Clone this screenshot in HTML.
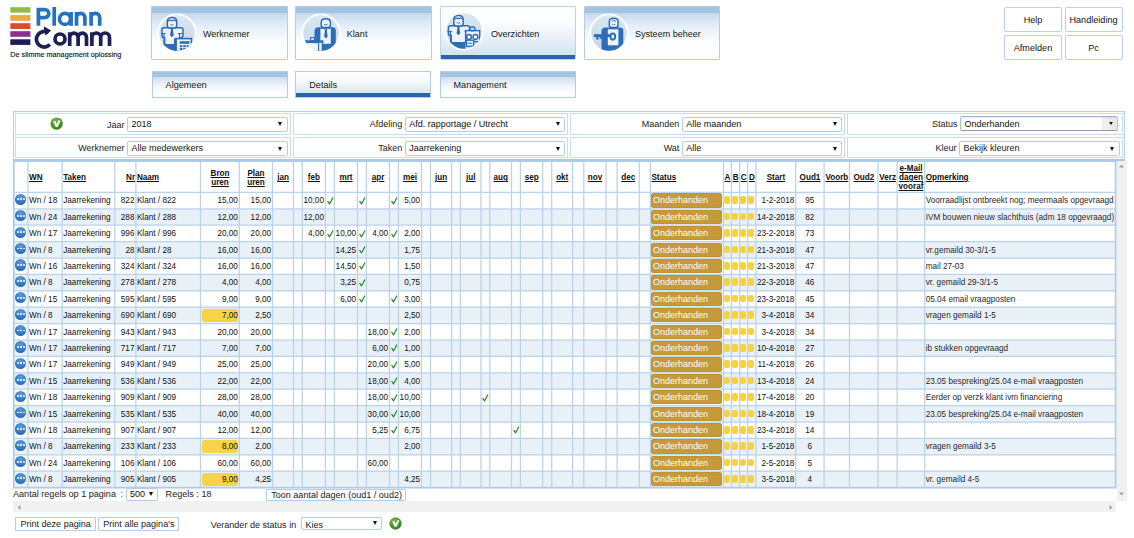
<!DOCTYPE html>
<html><head><meta charset="utf-8">
<style>
*{box-sizing:border-box;margin:0;padding:0}
html,body{width:1134px;height:538px;overflow:hidden;background:#fff;font-family:"Liberation Sans",sans-serif;color:#222}
.abs{position:absolute}
/* nav */
.nb{position:absolute;top:5.85px;width:136.3px;height:54.65px;border:1px solid #b3cde7;border-radius:1px;
 background:linear-gradient(#a4c3e1 0,#a4c3e1 5.6px,#c4d9ed 5.6px,#e3edf7 18px,#fbfdfe 34px,#fff 100%)}
.nb.sel{background:linear-gradient(#fff 0,#fbfdfe 30%,#d4e3f1 calc(100% - 3.8px),#2b63ae calc(100% - 3.8px),#2b63ae 100%);border-color:#bcd3ea}
.nb span{position:absolute;left:50.5px;top:22.2px;font-size:9.05px;color:#151515}
.nb svg{position:absolute;left:4.6px;top:5.7px}
.sb{position:absolute;top:70.8px;width:136.2px;height:26.8px;border:1px solid #b3cde7;
 background:linear-gradient(#a4c3e1 0,#a4c3e1 5.4px,#cfe0f0 5.4px,#eef4fa 13px,#fff 22px,#fff 100%)}
.sb.sel{background:linear-gradient(#fff 0,#f6f9fc 40%,#d8e6f3 calc(100% - 4.3px),#2b63ae calc(100% - 4.3px),#2b63ae 100%)}
.sb span{position:absolute;left:13px;top:8.2px;font-size:9.1px;color:#151515}
.tb{position:absolute;height:25.2px;border:1px solid #b8d1ea;border-radius:2px;background:#fff;font-size:9.1px;color:#111;text-align:center;line-height:24.2px}
/* filter */
.ft{position:absolute;left:13.2px;top:110.6px;width:1111.4px;height:50.4px;border:1px solid #b6cfe7;border-bottom:2px solid #a9c6e3}
.fc{position:absolute;height:22px;border:1px solid #c9dcef}
.fl{position:absolute;font-size:9px;color:#1a1a1a;text-align:right;width:110px}
.sel2{position:absolute;width:160.4px;height:15.4px;border:1px solid #b3cde6;border-radius:2px;background:#fff;font-size:9px;line-height:13px;padding-left:3.3px;color:#111}
.sel2:after{content:"";position:absolute;right:4.2px;top:4.6px;border-left:2.3px solid transparent;border-right:2.3px solid transparent;border-top:4px solid #111}
.sel2.sm:after{top:2.8px}
.sel2.st4{border:1px solid #b4c4d2;border-top-color:#9fb4c8;border-bottom-color:#8d9cab;box-shadow:inset 1px 1px 1px rgba(0,0,0,.08);border-radius:2px;background:linear-gradient(to right,#fff 0,#fff calc(100% - 14.5px),#efefef calc(100% - 14.5px),#e9e9e9 100%)}
.sel2.st4:after{right:3.8px;top:5.6px;border-left-width:2.9px;border-right-width:2.9px;border-top-width:3.4px}
/* grid */
.rbg{position:absolute;left:13.7px;width:1102px;background:#e8f0f8}
.hl{position:absolute;left:13px;width:1104px;height:2px;background:#d0e1f1}
.vl{position:absolute;top:160px;height:329px;width:2px;background:#d0e1f1}
.hc{position:absolute;top:162.5px;height:30.5px;display:flex;align-items:center;font-size:8.15px;font-weight:bold;line-height:9.2px;color:#111}
.hc u{text-decoration:underline;text-underline-offset:1px}
.hc.center{justify-content:center;text-align:center}
.hc.right{justify-content:flex-end;text-align:right}
.hc.left{justify-content:flex-start}
.c{position:absolute;height:16.4px;line-height:16.4px;padding-top:1px;font-size:8.2px;white-space:nowrap;color:#111}
.c.right{text-align:right}
.c.center{text-align:center}
.c.opm{color:#2a2a2a;width:190px!important}
.ico{position:absolute;left:15.1px;width:11.4px;height:11.4px;border-radius:50%;background:radial-gradient(circle at 50% 30%,#5a9de0,#2d6fbd 70%,#245fa8);display:flex;justify-content:center;align-items:center;gap:1.3px}
.ico i{display:block;width:1.8px;height:1.8px;background:#fff;border-radius:50%}
.chk{position:absolute}
.st{position:absolute;left:651.3px;width:70.8px;height:14.3px;border-radius:3px;background:#c59a38;box-shadow:inset 0 0 0 0.6px #b88d2c;color:#fff;font-size:9px;line-height:14.8px;padding-left:1.7px}
.dot{position:absolute;width:6px;height:7.8px;border-radius:2px;background:#f7d23c}
.hib{position:absolute;width:36.5px;height:13.4px;border-radius:3px;background:#f6d347}
/* scrollbars */
.vs{position:absolute;left:1116.5px;top:161.2px;width:10px;height:339.8px;background:#f1f1f1}
.hs{position:absolute;left:13.2px;top:501.2px;width:1102.8px;height:11.3px;background:#f1f1f1}
.btn{position:absolute;height:13.8px;border:1px solid #b3cee8;border-radius:1px;background:#fff;font-size:9.05px;line-height:12px;color:#222;padding-left:4.6px;white-space:nowrap}
</style></head><body>

<svg class="abs" style="left:0;top:0" width="130" height="62" viewBox="0 0 130 62">
<rect x="10.3" y="7.2" width="20.1" height="5.5" fill="#8dbf45"/>
<rect x="10.3" y="15.1" width="20.1" height="5.7" fill="#efa944"/>
<rect x="10.3" y="23.2" width="20.1" height="5.8" fill="#e04a2c"/>
<rect x="10.3" y="31.2" width="20.1" height="5.6" fill="#8c2f8f"/>
<rect x="10.3" y="39.3" width="20.1" height="5.6" fill="#1c1f55"/>
<g fill="none" stroke="#2673bd" stroke-width="3.7">
<path d="M38.4 7.8 V25.8 M38.4 9.6 H44.8 A4 4 0 0 1 44.8 17.6 H38.4"/>
<path d="M54.2 7 V25.8"/>
<circle cx="65" cy="18.9" r="5.5"/><path d="M71.1 12 V25.8"/>
<path d="M76.5 12 V25.8 M76.5 17.6 A4.2 4.2 0 0 1 84.9 17.6 V25.8"/>
<path d="M91.1 12 V25.8 M91.1 17.6 A4.3 4.3 0 0 1 99.7 17.6 V25.8"/>
</g>
<g fill="none" stroke="#1e1f55" stroke-width="3.7">
<path d="M48.6 32.8 A7.8 7.8 0 1 0 49.9 44.6"/>
<circle cx="60" cy="39" r="5"/>
<path d="M69.7 32.2 V45.9 M69.7 37.4 A4.2 4.2 0 0 1 78.1 37.4 V45.9 M78.1 37.4 A4.2 4.2 0 0 1 86.5 37.4 V45.9"/>
<path d="M91.9 32.2 V45.9 M91.9 37.4 A4.4 4.4 0 0 1 100.7 37.4 V45.9 M100.7 37.4 A4.4 4.4 0 0 1 109.5 37.4 V45.9"/>
</g>
<path d="M43.6 26.3 L51.2 30.6 L45.4 35.6 Z" fill="#1e1f55"/>
<text x="10.3" y="56.8" font-family="Liberation Sans" font-size="7.25" fill="#1a1a1a" stroke="#1a1a1a" stroke-width="0.15" textLength="111.1" lengthAdjust="spacingAndGlyphs">De slimme management oplossing</text>
</svg>
<div class="nb" style="left:151.4px"><svg width="40" height="40" viewBox="0 0 40 40"><defs><linearGradient id="gw" x1="0" y1="0" x2="0" y2="1"><stop offset="0" stop-color="#dbe7f3"/><stop offset="1" stop-color="#c4d8eb"/></linearGradient><clipPath id="cpw"><circle cx="20" cy="20" r="17.8"/></clipPath></defs><circle cx="20" cy="20" r="19.6" fill="#fff"/><circle cx="20" cy="20" r="17.8" fill="url(#gw)"/><g clip-path="url(#cpw)"><g transform="translate(0,0)"><path d="M5.5 14.8 h18.5 q2 0 2 2 v5.5 q0 2.5 -2.3 2.5 h-0.5 v7 h-15.5 v-7 h-0.5 q-2.2 0 -2.2 -2.5 v-5.5 q0 -2 2 -2 z" fill="#eef3f9" stroke="#2d6db7" stroke-width="1.5"/><path d="M7 21 v10" stroke="#2d6db7" stroke-width="1.2"/><path d="M22.5 21 v10" stroke="#2d6db7" stroke-width="1.2"/><path d="M4 20.5 h4.5 M21 20.5 h4.5" stroke="#2d6db7" stroke-width="1.2"/><path d="M3 31 h19 v10 h-19 z" fill="#2d6db7"/><path d="M10.3 8.5 q0 -4 4.7 -4 q4.7 0 4.7 4 v4 q0 2.5 -2.5 2.5 h-4.4 q-2.5 0 -2.5 -2.5 z" fill="#eef3f9" stroke="#2d6db7" stroke-width="1.5"/><path d="M11 8.3 q2 -2.2 4 -0.5 q2 -1.7 4 0.5" fill="none" stroke="#2d6db7" stroke-width="1.2"/><path d="M13.3 11.6 q1.7 1.3 3.4 0" fill="none" stroke="#2d6db7" stroke-width="0.9"/><path d="M13.6 15 h2.6 l-0.3 2 l0.9 5.3 l-1.9 2 l-1.9 -2 l0.9 -5.3 z" fill="#2d6db7"/></g><rect x="18.4" y="25.6" width="16" height="13" fill="#eef3f9" stroke="#2d6db7" stroke-width="1.6"/><path d="M18.4 25.6 v14" stroke="#2d6db7" stroke-width="3"/><rect x="22.8" y="28.2" width="9.6" height="2.6" fill="#2d6db7"/><rect x="22.8" y="32.2" width="2.6" height="2" fill="#2d6db7"/><rect x="26.2" y="32.2" width="2.6" height="2" fill="#2d6db7"/><rect x="29.6" y="32.2" width="2.6" height="2" fill="#2d6db7"/><rect x="22.8" y="35.0" width="2.6" height="2" fill="#2d6db7"/><rect x="26.2" y="35.0" width="2.6" height="2" fill="#2d6db7"/><rect x="29.6" y="35.0" width="2.6" height="2" fill="#2d6db7"/></g></svg><span>Werknemer</span></div>
<div class="nb" style="left:295.3px"><svg width="40" height="40" viewBox="0 0 40 40"><defs><linearGradient id="gk" x1="0" y1="0" x2="0" y2="1"><stop offset="0" stop-color="#dbe7f3"/><stop offset="1" stop-color="#c4d8eb"/></linearGradient><clipPath id="cpk"><circle cx="20" cy="20" r="17.8"/></clipPath></defs><circle cx="20" cy="20" r="19.6" fill="#fff"/><circle cx="20" cy="20" r="17.8" fill="url(#gk)"/><g clip-path="url(#cpk)"><path d="M17.5 14.2 h14 q3.3 0 3.3 3.3 v15 q-1.5 5 -8 5.5 h-13.3 v-19.5 q0 -4.3 4 -4.3 z" fill="#2d6db7"/><rect x="19.4" y="15.8" width="10.4" height="15" fill="#eef3f9"/><path d="M23.3 16.2 h2.9 l-0.3 1.8 l0.8 5.6 l-1.8 1.8 l-1.8 -1.8 l0.8 -5.6 z" fill="#2d6db7"/><path d="M20.2 9.2 q0 -3.5 4.6 -3.5 q4.6 0 4.6 3.5 v2.6 q0 2.8 -2.4 2.8 h-4.4 q-2.4 0 -2.4 -2.8 z" fill="#eef3f9" stroke="#2d6db7" stroke-width="1.5"/><path d="M23 11.3 q1.8 1.3 3.6 0" fill="none" stroke="#2d6db7" stroke-width="0.9"/><rect x="3" y="27.3" width="19.5" height="2.9" fill="#2d6db7"/><rect x="3" y="30.2" width="14.6" height="10" fill="#eef3f9"/><rect x="17.6" y="29.2" width="3.6" height="12" fill="#eef3f9" stroke="#2d6db7" stroke-width="1.1"/><rect x="9.6" y="24.6" width="3.8" height="2.9" fill="#eef3f9" stroke="#2d6db7" stroke-width="1.1"/></g></svg><span>Klant</span></div>
<div class="nb sel" style="left:439.5px"><svg style="left:3.2px;top:4.5px" width="40" height="40" viewBox="0 0 40 40"><defs><linearGradient id="go" x1="0" y1="0" x2="0" y2="1"><stop offset="0" stop-color="#dbe7f3"/><stop offset="1" stop-color="#c4d8eb"/></linearGradient><clipPath id="cpo"><circle cx="20" cy="20" r="17.8"/></clipPath></defs><circle cx="20" cy="20" r="19.6" fill="#fff"/><circle cx="20" cy="20" r="17.8" fill="url(#go)"/><g clip-path="url(#cpo)"><g transform="translate(-0.5,0)"><path d="M5.5 14.8 h18.5 q2 0 2 2 v5.5 q0 2.5 -2.3 2.5 h-0.5 v7 h-15.5 v-7 h-0.5 q-2.2 0 -2.2 -2.5 v-5.5 q0 -2 2 -2 z" fill="#eef3f9" stroke="#2d6db7" stroke-width="1.5"/><path d="M7 21 v10" stroke="#2d6db7" stroke-width="1.2"/><path d="M22.5 21 v10" stroke="#2d6db7" stroke-width="1.2"/><path d="M4 20.5 h4.5 M21 20.5 h4.5" stroke="#2d6db7" stroke-width="1.2"/><path d="M3 31 h19 v10 h-19 z" fill="#2d6db7"/><path d="M10.3 8.5 q0 -4 4.7 -4 q4.7 0 4.7 4 v4 q0 2.5 -2.5 2.5 h-4.4 q-2.5 0 -2.5 -2.5 z" fill="#eef3f9" stroke="#2d6db7" stroke-width="1.5"/><path d="M11 8.3 q2 -2.2 4 -0.5 q2 -1.7 4 0.5" fill="none" stroke="#2d6db7" stroke-width="1.2"/><path d="M13.3 11.6 q1.7 1.3 3.4 0" fill="none" stroke="#2d6db7" stroke-width="0.9"/><path d="M13.6 15 h2.6 l-0.3 2 l0.9 5.3 l-1.9 2 l-1.9 -2 l0.9 -5.3 z" fill="#2d6db7"/></g><rect x="21.6" y="19.6" width="14" height="11" fill="#eef3f9" stroke="#2d6db7" stroke-width="1.4"/><rect x="26" y="16" width="5" height="3.8" rx="1.5" fill="none" stroke="#2d6db7" stroke-width="1.3"/><circle cx="25" cy="26" r="2.4" fill="#fff" stroke="#2d6db7" stroke-width="1.5"/><circle cx="31.4" cy="26" r="2.4" fill="#fff" stroke="#2d6db7" stroke-width="1.5"/><rect x="22.6" y="29.2" width="7" height="6" fill="#eef3f9" stroke="#2d6db7" stroke-width="1.3"/><path d="M24 32.2 h4.2" stroke="#2d6db7" stroke-width="1.1"/></g></svg><span>Overzichten</span></div>
<div class="nb" style="left:583.5px"><svg width="40" height="40" viewBox="0 0 40 40"><defs><linearGradient id="gs" x1="0" y1="0" x2="0" y2="1"><stop offset="0" stop-color="#dbe7f3"/><stop offset="1" stop-color="#c4d8eb"/></linearGradient><clipPath id="cps"><circle cx="20" cy="20" r="17.8"/></clipPath></defs><circle cx="20" cy="20" r="19.6" fill="#fff"/><circle cx="20" cy="20" r="17.8" fill="url(#gs)"/><g clip-path="url(#cps)"><path d="M16.5 14.5 h14.5 q3.3 0 3.3 3.3 v15 q-1.5 5.5 -8 5.5 h-13.8 v-19.8 q0 -4 4 -4 z" fill="#2d6db7"/><rect x="18.8" y="16.3" width="10.6" height="16" fill="#eef3f9"/><ellipse cx="23.8" cy="23.6" rx="2.4" ry="3.1" fill="none" stroke="#2d6db7" stroke-width="1.9"/><path d="M20.3 8.5 q0 -3.2 4.4 -3.2 q4.4 0 4.4 3.2 v3.6 q0 2.4 -2.4 2.4 h-4 q-2.4 0 -2.4 -2.4 z" fill="#eef3f9" stroke="#2d6db7" stroke-width="1.5"/><path d="M22.6 8.7 l2.1 -1.8 l2.1 1.8" fill="none" stroke="#2d6db7" stroke-width="1"/><path d="M23.2 11.3 q1.5 1 3 0" fill="none" stroke="#2d6db7" stroke-width="0.9"/><rect x="4.8" y="21.2" width="16.8" height="2.8" fill="#2d6db7"/><rect x="7.2" y="23" width="2.3" height="3.6" fill="#2d6db7"/><rect x="10.6" y="23" width="2.3" height="2.8" fill="#2d6db7"/></g></svg><span>Systeem beheer</span></div>
<div class="sb" style="left:151.6px"><span>Algemeen</span></div>
<div class="sb sel" style="left:295.3px"><span>Details</span></div>
<div class="sb" style="left:439.5px"><span>Management</span></div>
<div class="tb" style="left:1004.1px;top:6.5px;width:57.8px">Help</div>
<div class="tb" style="left:1064.5px;top:6.5px;width:58px">Handleiding</div>
<div class="tb" style="left:1004.1px;top:34.8px;width:57.8px">Afmelden</div>
<div class="tb" style="left:1064.5px;top:34.8px;width:58px">Pc</div>
<div class="ft"></div>
<div class="fc" style="left:15.4px;top:112.8px;width:275.3px;height:22.4px"></div>
<div class="fl" style="left:14.6px;top:118.3px;line-height:15px">Jaar</div>
<div class="sel2" style="left:127.2px;top:116.5px;padding-top:0.8px">2018</div>
<div class="fc" style="left:292.9px;top:112.8px;width:275.5px;height:22.4px"></div>
<div class="fl" style="left:292.3px;top:116.5px;line-height:15px">Afdeling</div>
<div class="sel2" style="left:404.9px;top:116.5px;padding-top:0.8px">Afd. rapportage / Utrecht</div>
<div class="fc" style="left:570.3px;top:112.8px;width:275.1px;height:22.4px"></div>
<div class="fl" style="left:569.3px;top:116.5px;line-height:15px">Maanden</div>
<div class="sel2" style="left:681.9px;top:116.5px;padding-top:0.8px">Alle maanden</div>
<div class="fc" style="left:847.3px;top:112.8px;width:275.4px;height:22.4px"></div>
<div class="fl" style="left:847.6px;top:116.5px;line-height:15px">Status</div>
<div class="sel2 st4" style="left:960.2px;top:116.5px;padding-top:0.8px;width:158.1px;top:115.9px;height:15.4px">Onderhanden</div>
<div class="fc" style="left:15.4px;top:137.4px;width:275.3px;height:20.9px"></div>
<div class="fl" style="left:14.6px;top:141.1px;line-height:15px">Werknemer</div>
<div class="sel2" style="left:127.2px;top:141.1px">Alle medewerkers</div>
<div class="fc" style="left:292.9px;top:137.4px;width:275.5px;height:20.9px"></div>
<div class="fl" style="left:292.3px;top:141.1px;line-height:15px">Taken</div>
<div class="sel2" style="left:404.9px;top:141.1px">Jaarrekening</div>
<div class="fc" style="left:570.3px;top:137.4px;width:275.1px;height:20.9px"></div>
<div class="fl" style="left:569.3px;top:141.1px;line-height:15px">Wat</div>
<div class="sel2" style="left:681.9px;top:141.1px">Alle</div>
<div class="fc" style="left:847.3px;top:137.4px;width:275.4px;height:20.9px"></div>
<div class="fl" style="left:846.6px;top:141.1px;line-height:15px">Kleur</div>
<div class="sel2" style="left:959.2px;top:141.1px;color:#1a1a1a">Bekijk kleuren</div>
<svg class="abs" style="left:49.9px;top:116.9px" width="13.2" height="13.2" viewBox="0 0 14 14"><defs><radialGradient id="gc56" cx="0.4" cy="0.3" r="0.8"><stop offset="0" stop-color="#74bd45"/><stop offset="1" stop-color="#2c7520"/></radialGradient></defs><circle cx="7" cy="7" r="6.6" fill="url(#gc56)"/><path d="M3.4 4.5 L5.7 4.3 L7.1 7.6 L9.3 3.2 L11.2 3.9 L8 10.6 L6.1 10.6 Z" fill="#fff"/></svg>
<div class="rbg" style="top:208.8px;height:16.4px"></div>
<div class="rbg" style="top:241.6px;height:16.4px"></div>
<div class="rbg" style="top:274.4px;height:16.4px"></div>
<div class="rbg" style="top:307.2px;height:16.4px"></div>
<div class="rbg" style="top:340px;height:16.4px"></div>
<div class="rbg" style="top:372.8px;height:16.4px"></div>
<div class="rbg" style="top:405.6px;height:16.4px"></div>
<div class="rbg" style="top:438.4px;height:16.4px"></div>
<div class="rbg" style="top:471.2px;height:16.4px"></div>
<svg class="abs" style="left:0;top:0" width="1134" height="538" viewBox="0 0 1134 538"><g stroke="#bad2ea" stroke-width="1.25" fill="none"><path d="M13.1 161.2 H1116.2"/><path d="M13.1 192.4 H1116.2"/><path d="M13.1 208.8 H1116.2"/><path d="M13.1 225.2 H1116.2"/><path d="M13.1 241.6 H1116.2"/><path d="M13.1 258 H1116.2"/><path d="M13.1 274.4 H1116.2"/><path d="M13.1 290.8 H1116.2"/><path d="M13.1 307.2 H1116.2"/><path d="M13.1 323.6 H1116.2"/><path d="M13.1 340 H1116.2"/><path d="M13.1 356.4 H1116.2"/><path d="M13.1 372.8 H1116.2"/><path d="M13.1 389.2 H1116.2"/><path d="M13.1 405.6 H1116.2"/><path d="M13.1 422 H1116.2"/><path d="M13.1 438.4 H1116.2"/><path d="M13.1 454.8 H1116.2"/><path d="M13.1 471.2 H1116.2"/><path d="M13.1 487.6 H1116.2"/><path d="M13.7 160.6 V488.3"/><path d="M28 160.6 V488.3"/><path d="M62.2 160.6 V488.3"/><path d="M114.8 160.6 V488.3"/><path d="M135.9 160.6 V488.3"/><path d="M200.5 160.6 V488.3"/><path d="M239.3 160.6 V488.3"/><path d="M272.5 160.6 V488.3"/><path d="M293.5 160.6 V488.3"/><path d="M302.3 160.6 V488.3"/><path d="M325.4 160.6 V488.3"/><path d="M334.4 160.6 V488.3"/><path d="M357.5 160.6 V488.3"/><path d="M366.4 160.6 V488.3"/><path d="M389.5 160.6 V488.3"/><path d="M398.4 160.6 V488.3"/><path d="M421.5 160.6 V488.3"/><path d="M430.5 160.6 V488.3"/><path d="M451.6 160.6 V488.3"/><path d="M460.4 160.6 V488.3"/><path d="M481 160.6 V488.3"/><path d="M489.8 160.6 V488.3"/><path d="M511.5 160.6 V488.3"/><path d="M520.4 160.6 V488.3"/><path d="M542.7 160.6 V488.3"/><path d="M551.7 160.6 V488.3"/><path d="M572.6 160.6 V488.3"/><path d="M583.8 160.6 V488.3"/><path d="M606 160.6 V488.3"/><path d="M617.1 160.6 V488.3"/><path d="M639.3 160.6 V488.3"/><path d="M650.4 160.6 V488.3"/><path d="M723.5 160.6 V488.3"/><path d="M731.4 160.6 V488.3"/><path d="M739.7 160.6 V488.3"/><path d="M747.6 160.6 V488.3"/><path d="M755.9 160.6 V488.3"/><path d="M795.7 160.6 V488.3"/><path d="M824.1 160.6 V488.3"/><path d="M849.5 160.6 V488.3"/><path d="M878 160.6 V488.3"/><path d="M897.1 160.6 V488.3"/><path d="M924.7 160.6 V488.3"/><path d="M1115.6 160.6 V488.3"/></g><rect x="13.7" y="161.2" width="1101.9" height="326.4" fill="none" stroke="#afcbe7" stroke-width="1.6"/></svg>
<div class="hc left" style="left:29px;width:32.4px"><u>WN</u></div>
<div class="hc left" style="left:63.2px;width:50.8px"><u>Taken</u></div>
<div class="hc right" style="left:115.8px;width:19.3px"><u>Nr</u></div>
<div class="hc left" style="left:136.9px;width:62.8px"><u>Naam</u></div>
<div class="hc center" style="left:201.5px;width:37px"><u>Bron<br>uren</u></div>
<div class="hc center" style="left:240.3px;width:31.4px"><u>Plan<br>uren</u></div>
<div class="hc center" style="left:273.5px;width:19.2px"><u>jan</u></div>
<div class="hc center" style="left:303.3px;width:21.3px"><u>feb</u></div>
<div class="hc center" style="left:335.4px;width:21.3px"><u>mrt</u></div>
<div class="hc center" style="left:367.4px;width:21.3px"><u>apr</u></div>
<div class="hc center" style="left:399.4px;width:21.3px"><u>mei</u></div>
<div class="hc center" style="left:431.5px;width:19.3px"><u>jun</u></div>
<div class="hc center" style="left:461.4px;width:18.8px"><u>jul</u></div>
<div class="hc center" style="left:490.8px;width:19.9px"><u>aug</u></div>
<div class="hc center" style="left:521.4px;width:20.5px"><u>sep</u></div>
<div class="hc center" style="left:552.7px;width:19.1px"><u>okt</u></div>
<div class="hc center" style="left:584.8px;width:20.4px"><u>nov</u></div>
<div class="hc center" style="left:618.1px;width:20.4px"><u>dec</u></div>
<div class="hc left" style="left:651.4px;width:71.3px"><u>Status</u></div>
<div class="hc center" style="left:724.5px;width:6.1px"><u>A</u></div>
<div class="hc center" style="left:732.4px;width:6.5px"><u>B</u></div>
<div class="hc center" style="left:740.7px;width:6.1px"><u>C</u></div>
<div class="hc center" style="left:748.6px;width:6.5px"><u>D</u></div>
<div class="hc center" style="left:756.9px;width:38px"><u>Start</u></div>
<div class="hc center" style="left:796.7px;width:26.6px"><u>Oud1</u></div>
<div class="hc center" style="left:825.1px;width:23.6px"><u>Voorb</u></div>
<div class="hc center" style="left:850.5px;width:26.7px"><u>Oud2</u></div>
<div class="hc center" style="left:879px;width:17.3px"><u>Verz</u></div>
<div class="hc center" style="left:898.1px;width:25.8px"><u>e-Mail<br>dagen<br>vooraf</u></div>
<div class="hc left" style="left:925.7px;width:189.1px"><u>Opmerking</u></div>
<div class="ico" style="top:193.7px"><i></i><i></i><i></i></div>
<div class="c left" style="left:29px;top:192.4px;width:31.8px">Wn / 18</div>
<div class="c left" style="left:63.2px;top:192.4px;width:50.2px">Jaarrekening</div>
<div class="c right" style="left:115.8px;top:192.4px;width:18.7px">822</div>
<div class="c left" style="left:136.9px;top:192.4px;width:62.2px">Klant / 822</div>
<div class="c right" style="left:201.5px;top:192.4px;width:36.4px">15,00</div>
<div class="c right" style="left:240.3px;top:192.4px;width:30.8px">15,00</div>
<div class="c right" style="left:303.3px;top:192.4px;width:20.7px">10,00</div>
<svg class="chk" style="left:326.6px;top:196.8px" width="7" height="8" viewBox="0 0 7 8"><path d="M0.8 4.4 L2.5 6.9 L5.7 0.9" fill="none" stroke="#2a821e" stroke-width="1.15" stroke-linejoin="round" stroke-linecap="round"/></svg>
<svg class="chk" style="left:358.7px;top:196.8px" width="7" height="8" viewBox="0 0 7 8"><path d="M0.8 4.4 L2.5 6.9 L5.7 0.9" fill="none" stroke="#2a821e" stroke-width="1.15" stroke-linejoin="round" stroke-linecap="round"/></svg>
<svg class="chk" style="left:390.7px;top:196.8px" width="7" height="8" viewBox="0 0 7 8"><path d="M0.8 4.4 L2.5 6.9 L5.7 0.9" fill="none" stroke="#2a821e" stroke-width="1.15" stroke-linejoin="round" stroke-linecap="round"/></svg>
<div class="c right" style="left:399.4px;top:192.4px;width:20.7px">5,00</div>
<div class="st" style="top:193.4px">Onderhanden</div>
<div class="dot" style="left:724.2px;top:196.3px"></div>
<div class="dot" style="left:732.1px;top:196.3px"></div>
<div class="dot" style="left:740.4px;top:196.3px"></div>
<div class="dot" style="left:748.3px;top:196.3px"></div>
<div class="c right" style="left:756.9px;top:192.4px;width:37.4px">1-2-2018</div>
<div class="c center" style="left:796.7px;top:192.4px;width:26px">95</div>
<div class="c left opm" style="left:925.7px;top:192.4px;width:188.5px">Voorraadlijst ontbreekt nog; meermaals opgevraagd</div>
<div class="ico" style="top:210.1px"><i></i><i></i><i></i></div>
<div class="c left" style="left:29px;top:208.8px;width:31.8px">Wn / 24</div>
<div class="c left" style="left:63.2px;top:208.8px;width:50.2px">Jaarrekening</div>
<div class="c right" style="left:115.8px;top:208.8px;width:18.7px">288</div>
<div class="c left" style="left:136.9px;top:208.8px;width:62.2px">Klant / 288</div>
<div class="c right" style="left:201.5px;top:208.8px;width:36.4px">12,00</div>
<div class="c right" style="left:240.3px;top:208.8px;width:30.8px">12,00</div>
<div class="c right" style="left:303.3px;top:208.8px;width:20.7px">12,00</div>
<div class="st" style="top:209.8px">Onderhanden</div>
<div class="dot" style="left:724.2px;top:212.7px"></div>
<div class="dot" style="left:732.1px;top:212.7px"></div>
<div class="dot" style="left:740.4px;top:212.7px"></div>
<div class="dot" style="left:748.3px;top:212.7px"></div>
<div class="c right" style="left:756.9px;top:208.8px;width:37.4px">14-2-2018</div>
<div class="c center" style="left:796.7px;top:208.8px;width:26px">82</div>
<div class="c left opm" style="left:925.7px;top:208.8px;width:188.5px">IVM bouwen nieuw slachthuis (adm 18 opgevraagd)</div>
<div class="ico" style="top:226.5px"><i></i><i></i><i></i></div>
<div class="c left" style="left:29px;top:225.2px;width:31.8px">Wn / 17</div>
<div class="c left" style="left:63.2px;top:225.2px;width:50.2px">Jaarrekening</div>
<div class="c right" style="left:115.8px;top:225.2px;width:18.7px">996</div>
<div class="c left" style="left:136.9px;top:225.2px;width:62.2px">Klant / 996</div>
<div class="c right" style="left:201.5px;top:225.2px;width:36.4px">20,00</div>
<div class="c right" style="left:240.3px;top:225.2px;width:30.8px">20,00</div>
<div class="c right" style="left:303.3px;top:225.2px;width:20.7px">4,00</div>
<svg class="chk" style="left:326.6px;top:229.6px" width="7" height="8" viewBox="0 0 7 8"><path d="M0.8 4.4 L2.5 6.9 L5.7 0.9" fill="none" stroke="#2a821e" stroke-width="1.15" stroke-linejoin="round" stroke-linecap="round"/></svg>
<div class="c right" style="left:335.4px;top:225.2px;width:20.7px">10,00</div>
<svg class="chk" style="left:358.7px;top:229.6px" width="7" height="8" viewBox="0 0 7 8"><path d="M0.8 4.4 L2.5 6.9 L5.7 0.9" fill="none" stroke="#2a821e" stroke-width="1.15" stroke-linejoin="round" stroke-linecap="round"/></svg>
<div class="c right" style="left:367.4px;top:225.2px;width:20.7px">4,00</div>
<svg class="chk" style="left:390.7px;top:229.6px" width="7" height="8" viewBox="0 0 7 8"><path d="M0.8 4.4 L2.5 6.9 L5.7 0.9" fill="none" stroke="#2a821e" stroke-width="1.15" stroke-linejoin="round" stroke-linecap="round"/></svg>
<div class="c right" style="left:399.4px;top:225.2px;width:20.7px">2,00</div>
<div class="st" style="top:226.2px">Onderhanden</div>
<div class="dot" style="left:724.2px;top:229.1px"></div>
<div class="dot" style="left:732.1px;top:229.1px"></div>
<div class="dot" style="left:740.4px;top:229.1px"></div>
<div class="dot" style="left:748.3px;top:229.1px"></div>
<div class="c right" style="left:756.9px;top:225.2px;width:37.4px">23-2-2018</div>
<div class="c center" style="left:796.7px;top:225.2px;width:26px">73</div>
<div class="c left opm" style="left:925.7px;top:225.2px;width:188.5px"></div>
<div class="ico" style="top:242.9px"><i></i><i></i><i></i></div>
<div class="c left" style="left:29px;top:241.6px;width:31.8px">Wn / 8</div>
<div class="c left" style="left:63.2px;top:241.6px;width:50.2px">Jaarrekening</div>
<div class="c right" style="left:115.8px;top:241.6px;width:18.7px">28</div>
<div class="c left" style="left:136.9px;top:241.6px;width:62.2px">Klant / 28</div>
<div class="c right" style="left:201.5px;top:241.6px;width:36.4px">16,00</div>
<div class="c right" style="left:240.3px;top:241.6px;width:30.8px">16,00</div>
<div class="c right" style="left:335.4px;top:241.6px;width:20.7px">14,25</div>
<svg class="chk" style="left:358.7px;top:246px" width="7" height="8" viewBox="0 0 7 8"><path d="M0.8 4.4 L2.5 6.9 L5.7 0.9" fill="none" stroke="#2a821e" stroke-width="1.15" stroke-linejoin="round" stroke-linecap="round"/></svg>
<div class="c right" style="left:399.4px;top:241.6px;width:20.7px">1,75</div>
<div class="st" style="top:242.6px">Onderhanden</div>
<div class="dot" style="left:724.2px;top:245.5px"></div>
<div class="dot" style="left:732.1px;top:245.5px"></div>
<div class="dot" style="left:740.4px;top:245.5px"></div>
<div class="dot" style="left:748.3px;top:245.5px"></div>
<div class="c right" style="left:756.9px;top:241.6px;width:37.4px">21-3-2018</div>
<div class="c center" style="left:796.7px;top:241.6px;width:26px">47</div>
<div class="c left opm" style="left:925.7px;top:241.6px;width:188.5px">vr.gemaild 30-3/1-5</div>
<div class="ico" style="top:259.3px"><i></i><i></i><i></i></div>
<div class="c left" style="left:29px;top:258px;width:31.8px">Wn / 16</div>
<div class="c left" style="left:63.2px;top:258px;width:50.2px">Jaarrekening</div>
<div class="c right" style="left:115.8px;top:258px;width:18.7px">324</div>
<div class="c left" style="left:136.9px;top:258px;width:62.2px">Klant / 324</div>
<div class="c right" style="left:201.5px;top:258px;width:36.4px">16,00</div>
<div class="c right" style="left:240.3px;top:258px;width:30.8px">16,00</div>
<div class="c right" style="left:335.4px;top:258px;width:20.7px">14,50</div>
<svg class="chk" style="left:358.7px;top:262.4px" width="7" height="8" viewBox="0 0 7 8"><path d="M0.8 4.4 L2.5 6.9 L5.7 0.9" fill="none" stroke="#2a821e" stroke-width="1.15" stroke-linejoin="round" stroke-linecap="round"/></svg>
<div class="c right" style="left:399.4px;top:258px;width:20.7px">1,50</div>
<div class="st" style="top:259px">Onderhanden</div>
<div class="dot" style="left:724.2px;top:261.9px"></div>
<div class="dot" style="left:732.1px;top:261.9px"></div>
<div class="dot" style="left:740.4px;top:261.9px"></div>
<div class="dot" style="left:748.3px;top:261.9px"></div>
<div class="c right" style="left:756.9px;top:258px;width:37.4px">21-3-2018</div>
<div class="c center" style="left:796.7px;top:258px;width:26px">47</div>
<div class="c left opm" style="left:925.7px;top:258px;width:188.5px">mail 27-03</div>
<div class="ico" style="top:275.7px"><i></i><i></i><i></i></div>
<div class="c left" style="left:29px;top:274.4px;width:31.8px">Wn / 8</div>
<div class="c left" style="left:63.2px;top:274.4px;width:50.2px">Jaarrekening</div>
<div class="c right" style="left:115.8px;top:274.4px;width:18.7px">278</div>
<div class="c left" style="left:136.9px;top:274.4px;width:62.2px">Klant / 278</div>
<div class="c right" style="left:201.5px;top:274.4px;width:36.4px">4,00</div>
<div class="c right" style="left:240.3px;top:274.4px;width:30.8px">4,00</div>
<div class="c right" style="left:335.4px;top:274.4px;width:20.7px">3,25</div>
<svg class="chk" style="left:358.7px;top:278.8px" width="7" height="8" viewBox="0 0 7 8"><path d="M0.8 4.4 L2.5 6.9 L5.7 0.9" fill="none" stroke="#2a821e" stroke-width="1.15" stroke-linejoin="round" stroke-linecap="round"/></svg>
<div class="c right" style="left:399.4px;top:274.4px;width:20.7px">0,75</div>
<div class="st" style="top:275.4px">Onderhanden</div>
<div class="dot" style="left:724.2px;top:278.3px"></div>
<div class="dot" style="left:732.1px;top:278.3px"></div>
<div class="dot" style="left:740.4px;top:278.3px"></div>
<div class="dot" style="left:748.3px;top:278.3px"></div>
<div class="c right" style="left:756.9px;top:274.4px;width:37.4px">22-3-2018</div>
<div class="c center" style="left:796.7px;top:274.4px;width:26px">46</div>
<div class="c left opm" style="left:925.7px;top:274.4px;width:188.5px">vr. gemaild 29-3/1-5</div>
<div class="ico" style="top:292.1px"><i></i><i></i><i></i></div>
<div class="c left" style="left:29px;top:290.8px;width:31.8px">Wn / 15</div>
<div class="c left" style="left:63.2px;top:290.8px;width:50.2px">Jaarrekening</div>
<div class="c right" style="left:115.8px;top:290.8px;width:18.7px">595</div>
<div class="c left" style="left:136.9px;top:290.8px;width:62.2px">Klant / 595</div>
<div class="c right" style="left:201.5px;top:290.8px;width:36.4px">9,00</div>
<div class="c right" style="left:240.3px;top:290.8px;width:30.8px">9,00</div>
<div class="c right" style="left:335.4px;top:290.8px;width:20.7px">6,00</div>
<svg class="chk" style="left:358.7px;top:295.2px" width="7" height="8" viewBox="0 0 7 8"><path d="M0.8 4.4 L2.5 6.9 L5.7 0.9" fill="none" stroke="#2a821e" stroke-width="1.15" stroke-linejoin="round" stroke-linecap="round"/></svg>
<svg class="chk" style="left:390.7px;top:295.2px" width="7" height="8" viewBox="0 0 7 8"><path d="M0.8 4.4 L2.5 6.9 L5.7 0.9" fill="none" stroke="#2a821e" stroke-width="1.15" stroke-linejoin="round" stroke-linecap="round"/></svg>
<div class="c right" style="left:399.4px;top:290.8px;width:20.7px">3,00</div>
<div class="st" style="top:291.8px">Onderhanden</div>
<div class="dot" style="left:724.2px;top:294.7px"></div>
<div class="dot" style="left:732.1px;top:294.7px"></div>
<div class="dot" style="left:740.4px;top:294.7px"></div>
<div class="dot" style="left:748.3px;top:294.7px"></div>
<div class="c right" style="left:756.9px;top:290.8px;width:37.4px">23-3-2018</div>
<div class="c center" style="left:796.7px;top:290.8px;width:26px">45</div>
<div class="c left opm" style="left:925.7px;top:290.8px;width:188.5px">05.04 email vraagposten</div>
<div class="ico" style="top:308.5px"><i></i><i></i><i></i></div>
<div class="c left" style="left:29px;top:307.2px;width:31.8px">Wn / 8</div>
<div class="c left" style="left:63.2px;top:307.2px;width:50.2px">Jaarrekening</div>
<div class="c right" style="left:115.8px;top:307.2px;width:18.7px">690</div>
<div class="c left" style="left:136.9px;top:307.2px;width:62.2px">Klant / 690</div>
<div class="hib" style="left:201.5px;top:308.8px"></div>
<div class="c right" style="left:201.5px;top:307.2px;width:36.4px">7,00</div>
<div class="c right" style="left:240.3px;top:307.2px;width:30.8px">2,50</div>
<div class="c right" style="left:399.4px;top:307.2px;width:20.7px">2,50</div>
<div class="st" style="top:308.2px">Onderhanden</div>
<div class="dot" style="left:724.2px;top:311.1px"></div>
<div class="dot" style="left:732.1px;top:311.1px"></div>
<div class="dot" style="left:740.4px;top:311.1px"></div>
<div class="dot" style="left:748.3px;top:311.1px"></div>
<div class="c right" style="left:756.9px;top:307.2px;width:37.4px">3-4-2018</div>
<div class="c center" style="left:796.7px;top:307.2px;width:26px">34</div>
<div class="c left opm" style="left:925.7px;top:307.2px;width:188.5px">vragen gemaild 1-5</div>
<div class="ico" style="top:324.9px"><i></i><i></i><i></i></div>
<div class="c left" style="left:29px;top:323.6px;width:31.8px">Wn / 17</div>
<div class="c left" style="left:63.2px;top:323.6px;width:50.2px">Jaarrekening</div>
<div class="c right" style="left:115.8px;top:323.6px;width:18.7px">943</div>
<div class="c left" style="left:136.9px;top:323.6px;width:62.2px">Klant / 943</div>
<div class="c right" style="left:201.5px;top:323.6px;width:36.4px">20,00</div>
<div class="c right" style="left:240.3px;top:323.6px;width:30.8px">20,00</div>
<div class="c right" style="left:367.4px;top:323.6px;width:20.7px">18,00</div>
<svg class="chk" style="left:390.7px;top:328px" width="7" height="8" viewBox="0 0 7 8"><path d="M0.8 4.4 L2.5 6.9 L5.7 0.9" fill="none" stroke="#2a821e" stroke-width="1.15" stroke-linejoin="round" stroke-linecap="round"/></svg>
<div class="c right" style="left:399.4px;top:323.6px;width:20.7px">2,00</div>
<div class="st" style="top:324.6px">Onderhanden</div>
<div class="dot" style="left:724.2px;top:327.5px"></div>
<div class="dot" style="left:732.1px;top:327.5px"></div>
<div class="dot" style="left:740.4px;top:327.5px"></div>
<div class="dot" style="left:748.3px;top:327.5px"></div>
<div class="c right" style="left:756.9px;top:323.6px;width:37.4px">3-4-2018</div>
<div class="c center" style="left:796.7px;top:323.6px;width:26px">34</div>
<div class="c left opm" style="left:925.7px;top:323.6px;width:188.5px"></div>
<div class="ico" style="top:341.3px"><i></i><i></i><i></i></div>
<div class="c left" style="left:29px;top:340px;width:31.8px">Wn / 17</div>
<div class="c left" style="left:63.2px;top:340px;width:50.2px">Jaarrekening</div>
<div class="c right" style="left:115.8px;top:340px;width:18.7px">717</div>
<div class="c left" style="left:136.9px;top:340px;width:62.2px">Klant / 717</div>
<div class="c right" style="left:201.5px;top:340px;width:36.4px">7,00</div>
<div class="c right" style="left:240.3px;top:340px;width:30.8px">7,00</div>
<div class="c right" style="left:367.4px;top:340px;width:20.7px">6,00</div>
<svg class="chk" style="left:390.7px;top:344.4px" width="7" height="8" viewBox="0 0 7 8"><path d="M0.8 4.4 L2.5 6.9 L5.7 0.9" fill="none" stroke="#2a821e" stroke-width="1.15" stroke-linejoin="round" stroke-linecap="round"/></svg>
<div class="c right" style="left:399.4px;top:340px;width:20.7px">1,00</div>
<div class="st" style="top:341px">Onderhanden</div>
<div class="dot" style="left:724.2px;top:343.9px"></div>
<div class="dot" style="left:732.1px;top:343.9px"></div>
<div class="dot" style="left:740.4px;top:343.9px"></div>
<div class="dot" style="left:748.3px;top:343.9px"></div>
<div class="c right" style="left:756.9px;top:340px;width:37.4px">10-4-2018</div>
<div class="c center" style="left:796.7px;top:340px;width:26px">27</div>
<div class="c left opm" style="left:925.7px;top:340px;width:188.5px">ib stukken opgevraagd</div>
<div class="ico" style="top:357.7px"><i></i><i></i><i></i></div>
<div class="c left" style="left:29px;top:356.4px;width:31.8px">Wn / 17</div>
<div class="c left" style="left:63.2px;top:356.4px;width:50.2px">Jaarrekening</div>
<div class="c right" style="left:115.8px;top:356.4px;width:18.7px">949</div>
<div class="c left" style="left:136.9px;top:356.4px;width:62.2px">Klant / 949</div>
<div class="c right" style="left:201.5px;top:356.4px;width:36.4px">25,00</div>
<div class="c right" style="left:240.3px;top:356.4px;width:30.8px">25,00</div>
<div class="c right" style="left:367.4px;top:356.4px;width:20.7px">20,00</div>
<svg class="chk" style="left:390.7px;top:360.8px" width="7" height="8" viewBox="0 0 7 8"><path d="M0.8 4.4 L2.5 6.9 L5.7 0.9" fill="none" stroke="#2a821e" stroke-width="1.15" stroke-linejoin="round" stroke-linecap="round"/></svg>
<div class="c right" style="left:399.4px;top:356.4px;width:20.7px">5,00</div>
<div class="st" style="top:357.4px">Onderhanden</div>
<div class="dot" style="left:724.2px;top:360.3px"></div>
<div class="dot" style="left:732.1px;top:360.3px"></div>
<div class="dot" style="left:740.4px;top:360.3px"></div>
<div class="dot" style="left:748.3px;top:360.3px"></div>
<div class="c right" style="left:756.9px;top:356.4px;width:37.4px">11-4-2018</div>
<div class="c center" style="left:796.7px;top:356.4px;width:26px">26</div>
<div class="c left opm" style="left:925.7px;top:356.4px;width:188.5px"></div>
<div class="ico" style="top:374.1px"><i></i><i></i><i></i></div>
<div class="c left" style="left:29px;top:372.8px;width:31.8px">Wn / 15</div>
<div class="c left" style="left:63.2px;top:372.8px;width:50.2px">Jaarrekening</div>
<div class="c right" style="left:115.8px;top:372.8px;width:18.7px">536</div>
<div class="c left" style="left:136.9px;top:372.8px;width:62.2px">Klant / 536</div>
<div class="c right" style="left:201.5px;top:372.8px;width:36.4px">22,00</div>
<div class="c right" style="left:240.3px;top:372.8px;width:30.8px">22,00</div>
<div class="c right" style="left:367.4px;top:372.8px;width:20.7px">18,00</div>
<svg class="chk" style="left:390.7px;top:377.2px" width="7" height="8" viewBox="0 0 7 8"><path d="M0.8 4.4 L2.5 6.9 L5.7 0.9" fill="none" stroke="#2a821e" stroke-width="1.15" stroke-linejoin="round" stroke-linecap="round"/></svg>
<div class="c right" style="left:399.4px;top:372.8px;width:20.7px">4,00</div>
<div class="st" style="top:373.8px">Onderhanden</div>
<div class="dot" style="left:724.2px;top:376.7px"></div>
<div class="dot" style="left:732.1px;top:376.7px"></div>
<div class="dot" style="left:740.4px;top:376.7px"></div>
<div class="dot" style="left:748.3px;top:376.7px"></div>
<div class="c right" style="left:756.9px;top:372.8px;width:37.4px">13-4-2018</div>
<div class="c center" style="left:796.7px;top:372.8px;width:26px">24</div>
<div class="c left opm" style="left:925.7px;top:372.8px;width:188.5px">23.05 bespreking/25.04 e-mail vraagposten</div>
<div class="ico" style="top:390.5px"><i></i><i></i><i></i></div>
<div class="c left" style="left:29px;top:389.2px;width:31.8px">Wn / 18</div>
<div class="c left" style="left:63.2px;top:389.2px;width:50.2px">Jaarrekening</div>
<div class="c right" style="left:115.8px;top:389.2px;width:18.7px">909</div>
<div class="c left" style="left:136.9px;top:389.2px;width:62.2px">Klant / 909</div>
<div class="c right" style="left:201.5px;top:389.2px;width:36.4px">28,00</div>
<div class="c right" style="left:240.3px;top:389.2px;width:30.8px">28,00</div>
<div class="c right" style="left:367.4px;top:389.2px;width:20.7px">18,00</div>
<svg class="chk" style="left:390.7px;top:393.6px" width="7" height="8" viewBox="0 0 7 8"><path d="M0.8 4.4 L2.5 6.9 L5.7 0.9" fill="none" stroke="#2a821e" stroke-width="1.15" stroke-linejoin="round" stroke-linecap="round"/></svg>
<div class="c right" style="left:399.4px;top:389.2px;width:20.7px">10,00</div>
<svg class="chk" style="left:482.2px;top:393.6px" width="7" height="8" viewBox="0 0 7 8"><path d="M0.8 4.4 L2.5 6.9 L5.7 0.9" fill="none" stroke="#2a821e" stroke-width="1.15" stroke-linejoin="round" stroke-linecap="round"/></svg>
<div class="st" style="top:390.2px">Onderhanden</div>
<div class="dot" style="left:724.2px;top:393.1px"></div>
<div class="dot" style="left:732.1px;top:393.1px"></div>
<div class="dot" style="left:740.4px;top:393.1px"></div>
<div class="dot" style="left:748.3px;top:393.1px"></div>
<div class="c right" style="left:756.9px;top:389.2px;width:37.4px">17-4-2018</div>
<div class="c center" style="left:796.7px;top:389.2px;width:26px">20</div>
<div class="c left opm" style="left:925.7px;top:389.2px;width:188.5px">Eerder op verzk klant ivm financiering</div>
<div class="ico" style="top:406.9px"><i></i><i></i><i></i></div>
<div class="c left" style="left:29px;top:405.6px;width:31.8px">Wn / 15</div>
<div class="c left" style="left:63.2px;top:405.6px;width:50.2px">Jaarrekening</div>
<div class="c right" style="left:115.8px;top:405.6px;width:18.7px">535</div>
<div class="c left" style="left:136.9px;top:405.6px;width:62.2px">Klant / 535</div>
<div class="c right" style="left:201.5px;top:405.6px;width:36.4px">40,00</div>
<div class="c right" style="left:240.3px;top:405.6px;width:30.8px">40,00</div>
<div class="c right" style="left:367.4px;top:405.6px;width:20.7px">30,00</div>
<svg class="chk" style="left:390.7px;top:410px" width="7" height="8" viewBox="0 0 7 8"><path d="M0.8 4.4 L2.5 6.9 L5.7 0.9" fill="none" stroke="#2a821e" stroke-width="1.15" stroke-linejoin="round" stroke-linecap="round"/></svg>
<div class="c right" style="left:399.4px;top:405.6px;width:20.7px">10,00</div>
<div class="st" style="top:406.6px">Onderhanden</div>
<div class="dot" style="left:724.2px;top:409.5px"></div>
<div class="dot" style="left:732.1px;top:409.5px"></div>
<div class="dot" style="left:740.4px;top:409.5px"></div>
<div class="dot" style="left:748.3px;top:409.5px"></div>
<div class="c right" style="left:756.9px;top:405.6px;width:37.4px">18-4-2018</div>
<div class="c center" style="left:796.7px;top:405.6px;width:26px">19</div>
<div class="c left opm" style="left:925.7px;top:405.6px;width:188.5px">23.05 bespreking/25.04 e-mail vraagposten</div>
<div class="ico" style="top:423.3px"><i></i><i></i><i></i></div>
<div class="c left" style="left:29px;top:422px;width:31.8px">Wn / 18</div>
<div class="c left" style="left:63.2px;top:422px;width:50.2px">Jaarrekening</div>
<div class="c right" style="left:115.8px;top:422px;width:18.7px">907</div>
<div class="c left" style="left:136.9px;top:422px;width:62.2px">Klant / 907</div>
<div class="c right" style="left:201.5px;top:422px;width:36.4px">12,00</div>
<div class="c right" style="left:240.3px;top:422px;width:30.8px">12,00</div>
<div class="c right" style="left:367.4px;top:422px;width:20.7px">5,25</div>
<svg class="chk" style="left:390.7px;top:426.4px" width="7" height="8" viewBox="0 0 7 8"><path d="M0.8 4.4 L2.5 6.9 L5.7 0.9" fill="none" stroke="#2a821e" stroke-width="1.15" stroke-linejoin="round" stroke-linecap="round"/></svg>
<div class="c right" style="left:399.4px;top:422px;width:20.7px">6,75</div>
<svg class="chk" style="left:512.7px;top:426.4px" width="7" height="8" viewBox="0 0 7 8"><path d="M0.8 4.4 L2.5 6.9 L5.7 0.9" fill="none" stroke="#2a821e" stroke-width="1.15" stroke-linejoin="round" stroke-linecap="round"/></svg>
<div class="st" style="top:423px">Onderhanden</div>
<div class="dot" style="left:724.2px;top:425.9px"></div>
<div class="dot" style="left:732.1px;top:425.9px"></div>
<div class="dot" style="left:740.4px;top:425.9px"></div>
<div class="dot" style="left:748.3px;top:425.9px"></div>
<div class="c right" style="left:756.9px;top:422px;width:37.4px">23-4-2018</div>
<div class="c center" style="left:796.7px;top:422px;width:26px">14</div>
<div class="c left opm" style="left:925.7px;top:422px;width:188.5px"></div>
<div class="ico" style="top:439.7px"><i></i><i></i><i></i></div>
<div class="c left" style="left:29px;top:438.4px;width:31.8px">Wn / 8</div>
<div class="c left" style="left:63.2px;top:438.4px;width:50.2px">Jaarrekening</div>
<div class="c right" style="left:115.8px;top:438.4px;width:18.7px">233</div>
<div class="c left" style="left:136.9px;top:438.4px;width:62.2px">Klant / 233</div>
<div class="hib" style="left:201.5px;top:440px"></div>
<div class="c right" style="left:201.5px;top:438.4px;width:36.4px">8,00</div>
<div class="c right" style="left:240.3px;top:438.4px;width:30.8px">2,00</div>
<div class="c right" style="left:399.4px;top:438.4px;width:20.7px">2,00</div>
<div class="st" style="top:439.4px">Onderhanden</div>
<div class="dot" style="left:724.2px;top:442.3px"></div>
<div class="dot" style="left:732.1px;top:442.3px"></div>
<div class="dot" style="left:740.4px;top:442.3px"></div>
<div class="dot" style="left:748.3px;top:442.3px"></div>
<div class="c right" style="left:756.9px;top:438.4px;width:37.4px">1-5-2018</div>
<div class="c center" style="left:796.7px;top:438.4px;width:26px">6</div>
<div class="c left opm" style="left:925.7px;top:438.4px;width:188.5px">vragen gemaild 3-5</div>
<div class="ico" style="top:456.1px"><i></i><i></i><i></i></div>
<div class="c left" style="left:29px;top:454.8px;width:31.8px">Wn / 24</div>
<div class="c left" style="left:63.2px;top:454.8px;width:50.2px">Jaarrekening</div>
<div class="c right" style="left:115.8px;top:454.8px;width:18.7px">106</div>
<div class="c left" style="left:136.9px;top:454.8px;width:62.2px">Klant / 106</div>
<div class="c right" style="left:201.5px;top:454.8px;width:36.4px">60,00</div>
<div class="c right" style="left:240.3px;top:454.8px;width:30.8px">60,00</div>
<div class="c right" style="left:367.4px;top:454.8px;width:20.7px">60,00</div>
<div class="st" style="top:455.8px">Onderhanden</div>
<div class="dot" style="left:724.2px;top:458.7px"></div>
<div class="dot" style="left:732.1px;top:458.7px"></div>
<div class="dot" style="left:740.4px;top:458.7px"></div>
<div class="dot" style="left:748.3px;top:458.7px"></div>
<div class="c right" style="left:756.9px;top:454.8px;width:37.4px">2-5-2018</div>
<div class="c center" style="left:796.7px;top:454.8px;width:26px">5</div>
<div class="c left opm" style="left:925.7px;top:454.8px;width:188.5px"></div>
<div class="ico" style="top:472.5px"><i></i><i></i><i></i></div>
<div class="c left" style="left:29px;top:471.2px;width:31.8px">Wn / 8</div>
<div class="c left" style="left:63.2px;top:471.2px;width:50.2px">Jaarrekening</div>
<div class="c right" style="left:115.8px;top:471.2px;width:18.7px">905</div>
<div class="c left" style="left:136.9px;top:471.2px;width:62.2px">Klant / 905</div>
<div class="hib" style="left:201.5px;top:472.8px"></div>
<div class="c right" style="left:201.5px;top:471.2px;width:36.4px">9,00</div>
<div class="c right" style="left:240.3px;top:471.2px;width:30.8px">4,25</div>
<div class="c right" style="left:399.4px;top:471.2px;width:20.7px">4,25</div>
<div class="st" style="top:472.2px">Onderhanden</div>
<div class="dot" style="left:724.2px;top:475.1px"></div>
<div class="dot" style="left:732.1px;top:475.1px"></div>
<div class="dot" style="left:740.4px;top:475.1px"></div>
<div class="dot" style="left:748.3px;top:475.1px"></div>
<div class="c right" style="left:756.9px;top:471.2px;width:37.4px">3-5-2018</div>
<div class="c center" style="left:796.7px;top:471.2px;width:26px">4</div>
<div class="c left opm" style="left:925.7px;top:471.2px;width:188.5px">vr. gemaild 4-5</div>
<div class="vs"><svg class="abs" style="left:2.5px;top:3px" width="5" height="4"><path d="M0 3.5 L2.5 0.5 L5 3.5z" fill="#a3a3a3"/></svg><svg class="abs" style="left:2.5px;top:331px" width="5" height="4"><path d="M0 0.5 L2.5 3.5 L5 0.5z" fill="#a3a3a3"/></svg></div>
<div class="hs"><svg class="abs" style="left:3.6px;top:3.4px" width="4" height="5"><path d="M3.5 0 L0.5 2.5 L3.5 5z" fill="#a3a3a3"/></svg><svg class="abs" style="left:1095.6px;top:3.4px" width="4" height="5"><path d="M0.5 0 L3.5 2.5 L0.5 5z" fill="#a3a3a3"/></svg></div>
<div class="abs" style="left:13px;top:489px;font-size:9.08px;line-height:11px;color:#222;white-space:nowrap">Aantal regels op 1 pagina</div>
<div class="abs" style="left:120.6px;top:489px;font-size:9.08px;line-height:11px;color:#555">:</div>
<div class="sel2 sm" style="left:126.4px;top:488.4px;width:31.3px;height:12.8px;line-height:11px;padding-left:2.6px">500</div>
<div class="abs" style="left:165.6px;top:489px;font-size:9.08px;line-height:11px;color:#222;white-space:nowrap">Regels : 18</div>
<div class="btn" style="left:265.6px;top:488.7px;width:140.4px;height:12.3px;line-height:10.5px">Toon aantal dagen (oud1 / oud2)</div>
<div class="btn" style="left:14.8px;top:517px;width:80.9px">Print deze pagina</div>
<div class="btn" style="left:97.7px;top:517px;width:80.9px">Print alle pagina's</div>
<div class="abs" style="left:210.7px;top:519px;font-size:9.05px;line-height:12px;color:#222;white-space:nowrap">Verander de status in</div>
<div class="sel2 sm" style="left:301.3px;top:517.4px;width:80.7px;height:13px;line-height:11px;padding-top:1.8px;color:#1a1a1a">Kies</div>
<svg class="abs" style="left:389px;top:516.5px" width="13" height="13" viewBox="0 0 14 14"><defs><radialGradient id="gc395" cx="0.4" cy="0.3" r="0.8"><stop offset="0" stop-color="#74bd45"/><stop offset="1" stop-color="#2c7520"/></radialGradient></defs><circle cx="7" cy="7" r="6.6" fill="url(#gc395)"/><path d="M3.4 4.5 L5.7 4.3 L7.1 7.6 L9.3 3.2 L11.2 3.9 L8 10.6 L6.1 10.6 Z" fill="#fff"/></svg>
</body></html>
